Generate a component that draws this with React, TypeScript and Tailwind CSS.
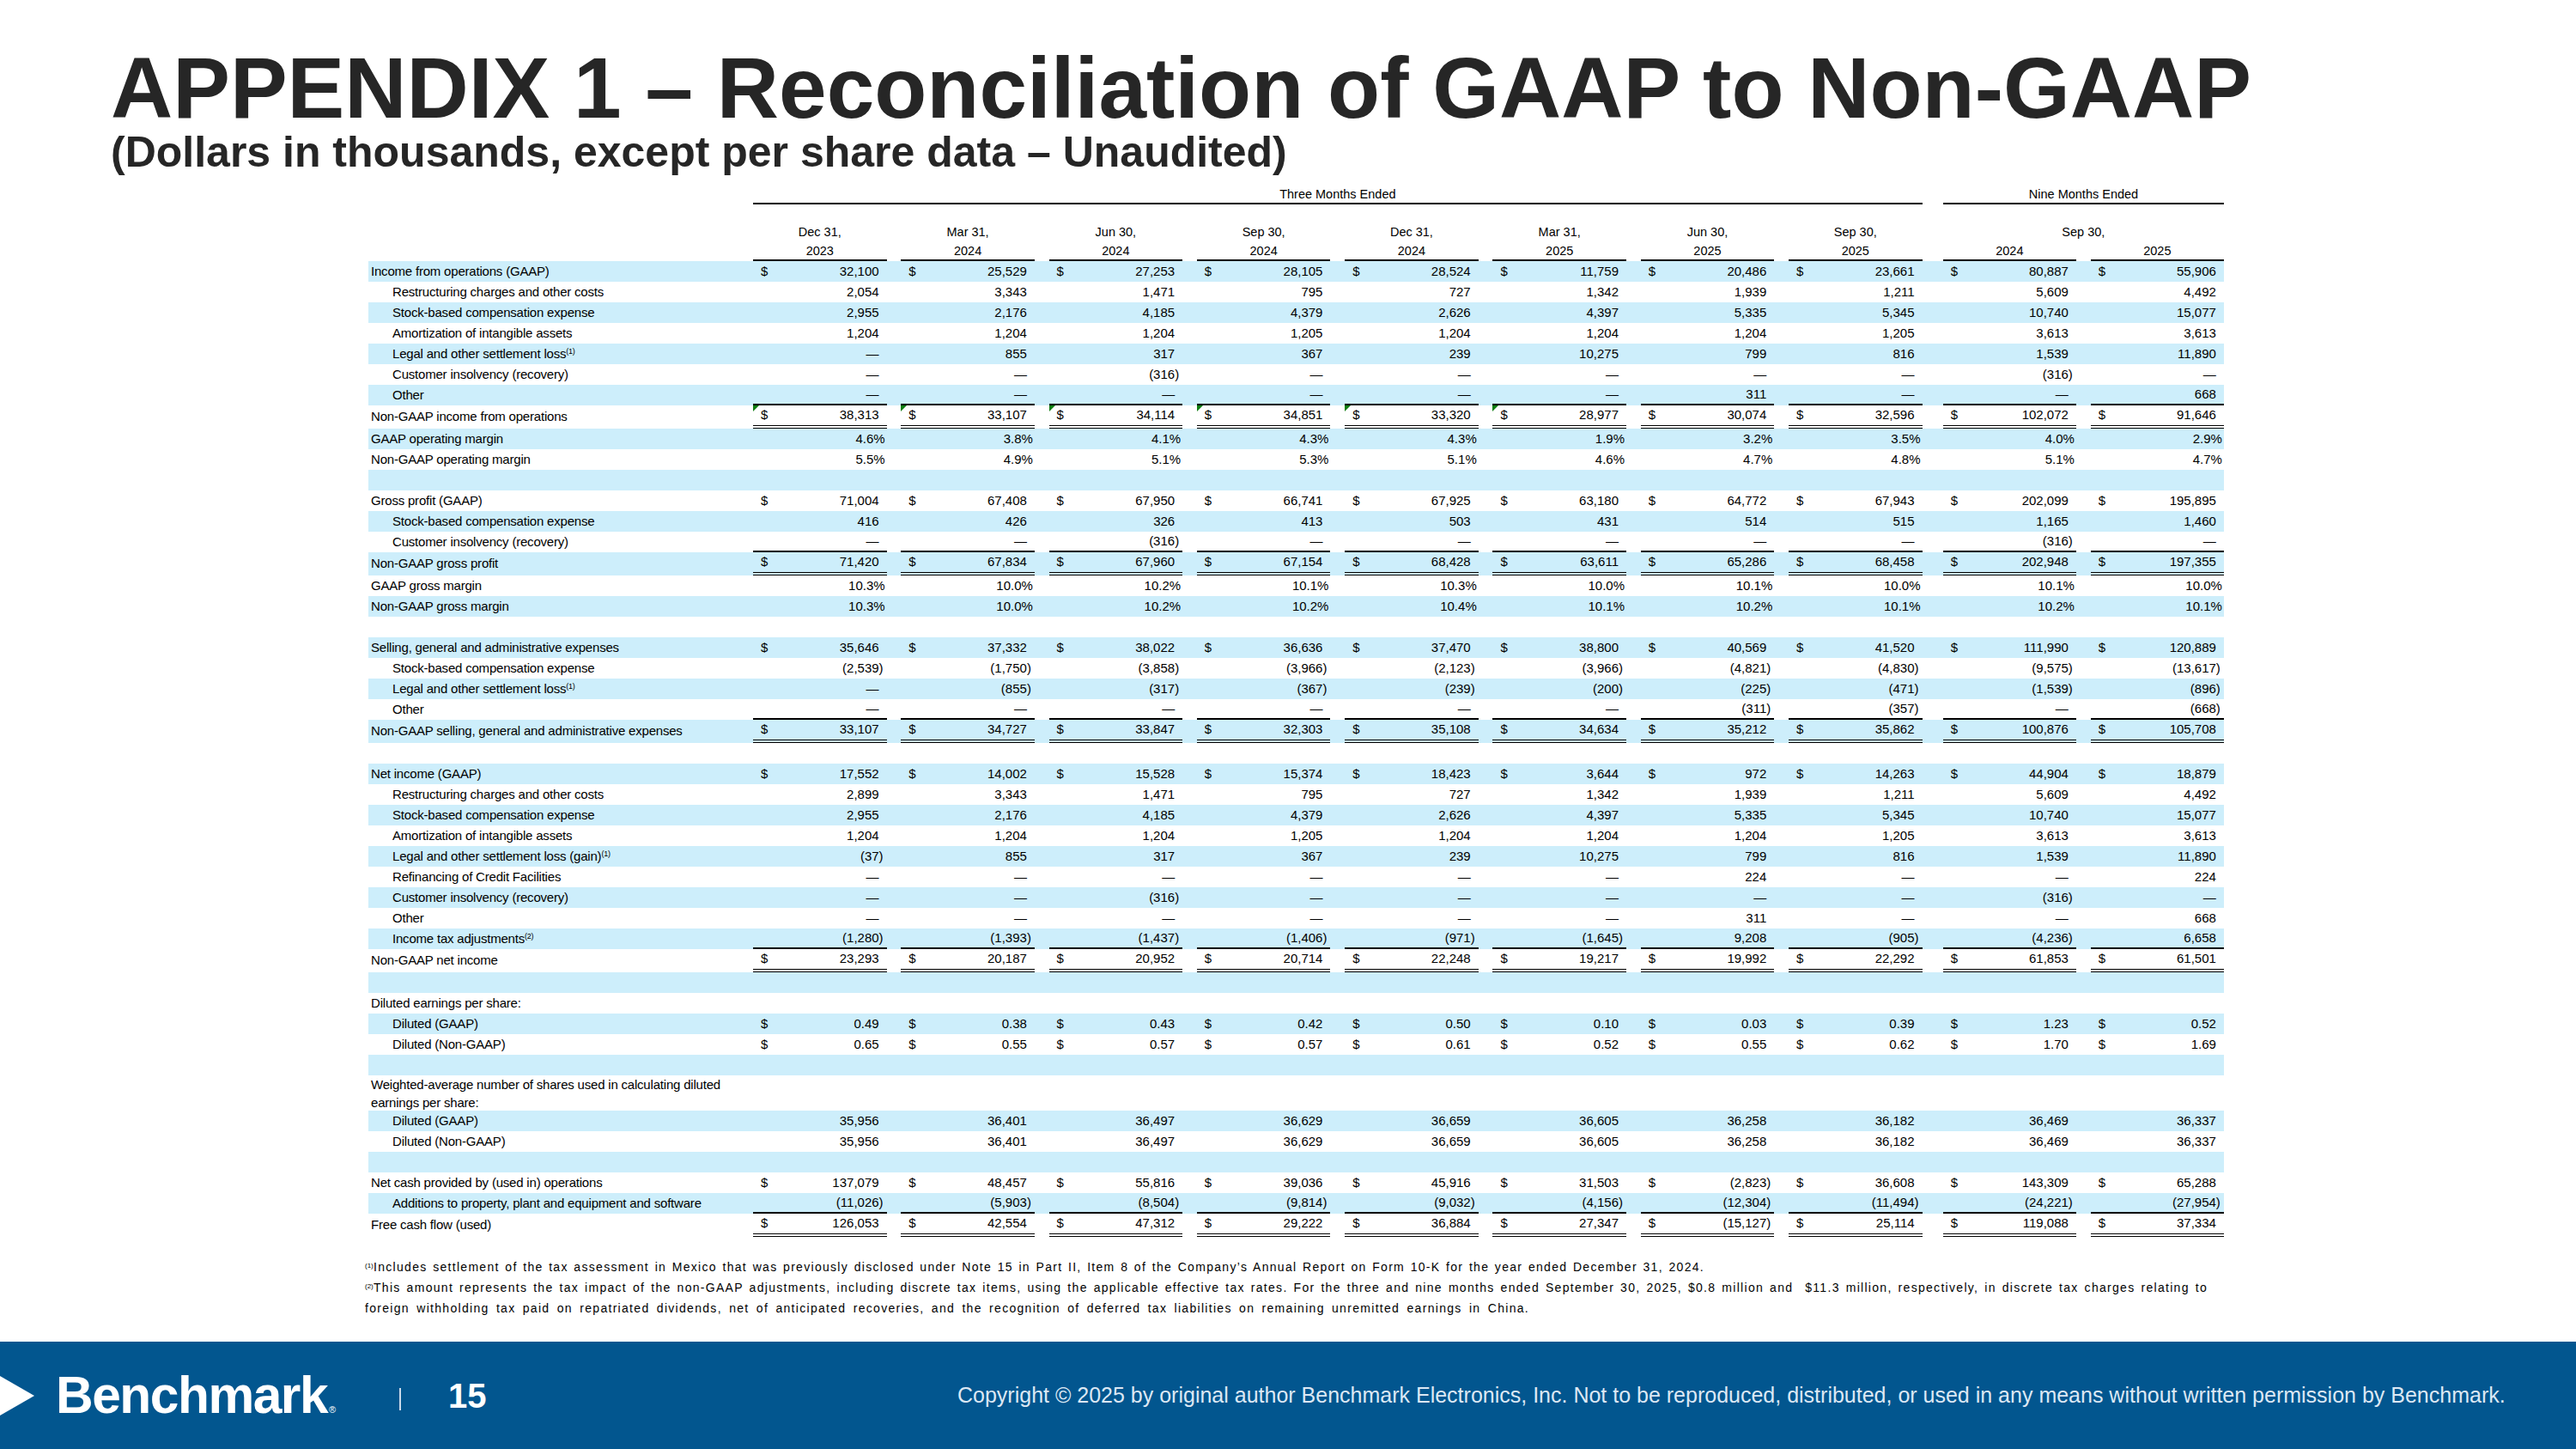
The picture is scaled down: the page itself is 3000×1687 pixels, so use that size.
import React from "react";

type Row = {
  label?: string;
  sup?: string;
  indent?: boolean;
  vals?: string[];
  dollar?: boolean;
  line?: "single" | "double";
  tri?: boolean;
  lines?: string[];
};

const D = "—";

const rows: Row[] = [
  { label: "Income from operations (GAAP)", dollar: true, vals: ["32,100", "25,529", "27,253", "28,105", "28,524", "11,759", "20,486", "23,661", "80,887", "55,906"] },
  { label: "Restructuring charges and other costs", indent: true, vals: ["2,054", "3,343", "1,471", "795", "727", "1,342", "1,939", "1,211", "5,609", "4,492"] },
  { label: "Stock-based compensation expense", indent: true, vals: ["2,955", "2,176", "4,185", "4,379", "2,626", "4,397", "5,335", "5,345", "10,740", "15,077"] },
  { label: "Amortization of intangible assets", indent: true, vals: ["1,204", "1,204", "1,204", "1,205", "1,204", "1,204", "1,204", "1,205", "3,613", "3,613"] },
  { label: "Legal and other settlement loss", sup: "(1)", indent: true, vals: [D, "855", "317", "367", "239", "10,275", "799", "816", "1,539", "11,890"] },
  { label: "Customer insolvency (recovery)", indent: true, vals: [D, D, "(316)", D, D, D, D, D, "(316)", D] },
  { label: "Other", indent: true, line: "single", vals: [D, D, D, D, D, D, "311", D, D, "668"] },
  { label: "Non-GAAP income from operations", dollar: true, line: "double", tri: true, vals: ["38,313", "33,107", "34,114", "34,851", "33,320", "28,977", "30,074", "32,596", "102,072", "91,646"] },
  { label: "GAAP operating margin", vals: ["4.6%", "3.8%", "4.1%", "4.3%", "4.3%", "1.9%", "3.2%", "3.5%", "4.0%", "2.9%"] },
  { label: "Non-GAAP operating margin", vals: ["5.5%", "4.9%", "5.1%", "5.3%", "5.1%", "4.6%", "4.7%", "4.8%", "5.1%", "4.7%"] },
  {},
  { label: "Gross profit (GAAP)", dollar: true, vals: ["71,004", "67,408", "67,950", "66,741", "67,925", "63,180", "64,772", "67,943", "202,099", "195,895"] },
  { label: "Stock-based compensation expense", indent: true, vals: ["416", "426", "326", "413", "503", "431", "514", "515", "1,165", "1,460"] },
  { label: "Customer insolvency (recovery)", indent: true, line: "single", vals: [D, D, "(316)", D, D, D, D, D, "(316)", D] },
  { label: "Non-GAAP gross profit", dollar: true, line: "double", vals: ["71,420", "67,834", "67,960", "67,154", "68,428", "63,611", "65,286", "68,458", "202,948", "197,355"] },
  { label: "GAAP gross margin", vals: ["10.3%", "10.0%", "10.2%", "10.1%", "10.3%", "10.0%", "10.1%", "10.0%", "10.1%", "10.0%"] },
  { label: "Non-GAAP gross margin", vals: ["10.3%", "10.0%", "10.2%", "10.2%", "10.4%", "10.1%", "10.2%", "10.1%", "10.2%", "10.1%"] },
  {},
  { label: "Selling, general and administrative expenses", dollar: true, vals: ["35,646", "37,332", "38,022", "36,636", "37,470", "38,800", "40,569", "41,520", "111,990", "120,889"] },
  { label: "Stock-based compensation expense", indent: true, vals: ["(2,539)", "(1,750)", "(3,858)", "(3,966)", "(2,123)", "(3,966)", "(4,821)", "(4,830)", "(9,575)", "(13,617)"] },
  { label: "Legal and other settlement loss", sup: "(1)", indent: true, vals: [D, "(855)", "(317)", "(367)", "(239)", "(200)", "(225)", "(471)", "(1,539)", "(896)"] },
  { label: "Other", indent: true, line: "single", vals: [D, D, D, D, D, D, "(311)", "(357)", D, "(668)"] },
  { label: "Non-GAAP selling, general and administrative expenses", dollar: true, line: "double", vals: ["33,107", "34,727", "33,847", "32,303", "35,108", "34,634", "35,212", "35,862", "100,876", "105,708"] },
  {},
  { label: "Net income (GAAP)", dollar: true, vals: ["17,552", "14,002", "15,528", "15,374", "18,423", "3,644", "972", "14,263", "44,904", "18,879"] },
  { label: "Restructuring charges and other costs", indent: true, vals: ["2,899", "3,343", "1,471", "795", "727", "1,342", "1,939", "1,211", "5,609", "4,492"] },
  { label: "Stock-based compensation expense", indent: true, vals: ["2,955", "2,176", "4,185", "4,379", "2,626", "4,397", "5,335", "5,345", "10,740", "15,077"] },
  { label: "Amortization of intangible assets", indent: true, vals: ["1,204", "1,204", "1,204", "1,205", "1,204", "1,204", "1,204", "1,205", "3,613", "3,613"] },
  { label: "Legal and other settlement loss (gain)", sup: "(1)", indent: true, vals: ["(37)", "855", "317", "367", "239", "10,275", "799", "816", "1,539", "11,890"] },
  { label: "Refinancing of Credit Facilities", indent: true, vals: [D, D, D, D, D, D, "224", D, D, "224"] },
  { label: "Customer insolvency (recovery)", indent: true, vals: [D, D, "(316)", D, D, D, D, D, "(316)", D] },
  { label: "Other", indent: true, vals: [D, D, D, D, D, D, "311", D, D, "668"] },
  { label: "Income tax adjustments", sup: "(2)", indent: true, line: "single", vals: ["(1,280)", "(1,393)", "(1,437)", "(1,406)", "(971)", "(1,645)", "9,208", "(905)", "(4,236)", "6,658"] },
  { label: "Non-GAAP net income", dollar: true, line: "double", vals: ["23,293", "20,187", "20,952", "20,714", "22,248", "19,217", "19,992", "22,292", "61,853", "61,501"] },
  {},
  { label: "Diluted earnings per share:" },
  { label: "Diluted (GAAP)", indent: true, dollar: true, vals: ["0.49", "0.38", "0.43", "0.42", "0.50", "0.10", "0.03", "0.39", "1.23", "0.52"] },
  { label: "Diluted (Non-GAAP)", indent: true, dollar: true, vals: ["0.65", "0.55", "0.57", "0.57", "0.61", "0.52", "0.55", "0.62", "1.70", "1.69"] },
  {},
  { lines: ["Weighted-average number of shares used in calculating diluted", "earnings per share:"] },
  { label: "Diluted (GAAP)", indent: true, vals: ["35,956", "36,401", "36,497", "36,629", "36,659", "36,605", "36,258", "36,182", "36,469", "36,337"] },
  { label: "Diluted (Non-GAAP)", indent: true, vals: ["35,956", "36,401", "36,497", "36,629", "36,659", "36,605", "36,258", "36,182", "36,469", "36,337"] },
  {},
  { label: "Net cash provided by (used in) operations", dollar: true, vals: ["137,079", "48,457", "55,816", "39,036", "45,916", "31,503", "(2,823)", "36,608", "143,309", "65,288"] },
  { label: "Additions to property, plant and equipment and software", indent: true, line: "single", vals: ["(11,026)", "(5,903)", "(8,504)", "(9,814)", "(9,032)", "(4,156)", "(12,304)", "(11,494)", "(24,221)", "(27,954)"] },
  { label: "Free cash flow (used)", dollar: true, line: "double", vals: ["126,053", "42,554", "47,312", "29,222", "36,884", "27,347", "(15,127)", "25,114", "119,088", "37,334"] },
];

// column placement: 8 quarters, then the two nine-month columns
const cellPos = [
  "w-[155.6px]",
  "ml-[16.7px] w-[155.6px]",
  "ml-[16.7px] w-[155.6px]",
  "ml-[16.7px] w-[155.6px]",
  "ml-[16.7px] w-[155.6px]",
  "ml-[16.7px] w-[155.6px]",
  "ml-[16.7px] w-[155.6px]",
  "ml-[16.7px] w-[155.6px]",
  "ml-[24.3px] w-[155px]",
  "ml-[17px] w-[155px]",
];

const quarters = [
  ["Dec 31,", "2023"],
  ["Mar 31,", "2024"],
  ["Jun 30,", "2024"],
  ["Sep 30,", "2024"],
  ["Dec 31,", "2024"],
  ["Mar 31,", "2025"],
  ["Jun 30,", "2025"],
  ["Sep 30,", "2025"],
];

function Val({ v }: { v: string }) {
  if (v.endsWith(")"))
    return (
      <span>
        {v.slice(0, -1)}
        <span className="-mr-[5px]">)</span>
      </span>
    );
  if (v.endsWith("%"))
    return (
      <span>
        {v.slice(0, -1)}
        <span className="-mr-[7px]">%</span>
      </span>
    );
  return <span>{v}</span>;
}

function TableRow({ row, idx }: { row: Row; idx: number }) {
  const bg = idx % 2 === 0 ? "bg-[#cdeefb]" : "bg-white";
  const h = row.lines
    ? "h-[41px]"
    : row.line === "double"
      ? "h-[27px]"
      : "h-[24px]";
  const border =
    row.line === "double"
      ? "border-b-4 border-double border-black"
      : row.line === "single"
        ? "border-b-2 border-black"
        : "";

  return (
    <div className={`flex ${h} ${bg}`}>
      <div
        className={`w-[448px] flex flex-col justify-center whitespace-nowrap tracking-[-0.2px] ${
          row.indent ? "pl-[28px]" : "pl-[3px]"
        }`}
      >
        {row.lines ? (
          row.lines.map((l) => (
            <div key={l} className="leading-[21px]">
              {l}
            </div>
          ))
        ) : (
          <div>
            {row.label}
            {row.sup && <sup className="text-[9px]">{row.sup}</sup>}
          </div>
        )}
      </div>
      {row.vals &&
        row.vals.map((v, i) => (
          <div
            key={i}
            className={`${cellPos[i]} ${border} relative flex items-center justify-between pl-[9px] pr-[9px]`}
          >
            <span>{row.dollar ? "$" : ""}</span>
            <Val v={v} />
            {row.tri && i < 6 && (
              <span className="absolute left-0 top-0 w-0 h-0 border-t-[7px] border-r-[7px] border-t-[#0f7f12] border-r-transparent" />
            )}
          </div>
        ))}
    </div>
  );
}

export default function App() {
  return (
    <div className="w-[3000px] h-[1687px] bg-white flex flex-col overflow-hidden font-['Liberation_Sans',Arial,sans-serif] text-black">
      {/* Title */}
      <div className="pl-[129px] pt-[52px] text-[#262626] font-bold">
        <h1 className="text-[100px] leading-none">
          APPENDIX 1 – Reconciliation of GAAP to Non-GAAP
        </h1>
        <p className="text-[50px] leading-none">
          (Dollars in thousands, except per share data – Unaudited)
        </p>
      </div>

      {/* Table */}
      <div className="ml-[429px] mt-[12px] w-[2161px] text-[15px]">
        <div className="flex h-[24px] text-[14.5px]">
          <div className="w-[448px]" />
          <div className="w-[1361.7px] border-b-2 border-black flex items-center justify-center pt-[3px]">
            Three Months Ended
          </div>
          <div className="ml-[24.3px] w-[327px] border-b-2 border-black flex items-center justify-center pt-[3px]">
            Nine Months Ended
          </div>
        </div>

        <div className="flex h-[66px] text-[14.5px]">
          <div className="w-[448px]" />
          {quarters.map((q, i) => (
            <div
              key={i}
              className={`${cellPos[i]} flex flex-col justify-end items-center border-b-2 border-black`}
            >
              <div className="leading-[24px]">{q[0]}</div>
              <div className="leading-[20px]">{q[1]}</div>
            </div>
          ))}
          <div className="ml-[24.3px] w-[327px] flex flex-col justify-end">
            <div className="text-center leading-[24px]">Sep 30,</div>
            <div className="flex">
              <div className="w-[155px] border-b-2 border-black text-center leading-[20px]">
                2024
              </div>
              <div className="ml-[17px] w-[155px] border-b-2 border-black text-center leading-[20px]">
                2025
              </div>
            </div>
          </div>
        </div>

        {rows.map((r, i) => (
          <TableRow key={i} row={r} idx={i} />
        ))}
      </div>

      {/* Footnotes */}
      <div className="ml-[425px] mt-[23px] text-[14px] leading-[24px] whitespace-nowrap">
        <div>
          <sup className="inline-block w-[10px] text-[8px]">(1)</sup>
          <span className="inline-block w-[1550px] tracking-[1.3px] text-justify [text-align-last:justify]">
            Includes settlement of the tax assessment in Mexico that was previously disclosed under Note 15 in Part II, Item 8 of the Company’s Annual Report on Form 10-K for the year ended December 31, 2024.
          </span>
        </div>
        <div>
          <sup className="inline-block w-[10px] text-[8px]">(2)</sup>
          <span className="inline-block w-[2136px] tracking-[1.3px] text-justify [text-align-last:justify]">
            This amount represents the tax impact of the non-GAAP adjustments, including discrete tax items, using the applicable effective tax rates. For the three and nine months ended September 30, 2025, $0.8 million and&nbsp; $11.3 million, respectively, in discrete tax charges relating to
          </span>
        </div>
        <div className="w-[1356px] tracking-[1.3px] text-justify [text-align-last:justify]">
          foreign withholding tax paid on repatriated dividends, net of anticipated recoveries, and the recognition of deferred tax liabilities on remaining unremitted earnings in China.
        </div>
      </div>

      {/* Footer */}
      <div className="mt-auto h-[125px] bg-[#02568f] flex items-center">
        <div className="w-[65px] flex items-center">
          <svg width="40" height="46" viewBox="0 0 40 46">
            <polygon points="0,0 40,23 0,46" fill="#ffffff" />
          </svg>
        </div>
        <div className="w-[400px] flex items-baseline text-white font-bold text-[60.5px] leading-none tracking-[-1.5px]">
          Benchmark
          <span className="text-[11px] font-normal tracking-normal ml-[2px]">®</span>
        </div>
        <div className="w-[57px] h-[26px] mt-[8px] flex">
          <div className="w-[2px] h-full bg-[#c9d9ea]" />
        </div>
        <div className="w-[593px] text-white font-bold text-[40px] leading-none">15</div>
        <div className="text-[25px] text-[#dce8f4] whitespace-nowrap">
          Copyright © 2025 by original author Benchmark Electronics, Inc. Not to be reproduced, distributed, or used in any means without written permission by Benchmark.
        </div>
      </div>
    </div>
  );
}
